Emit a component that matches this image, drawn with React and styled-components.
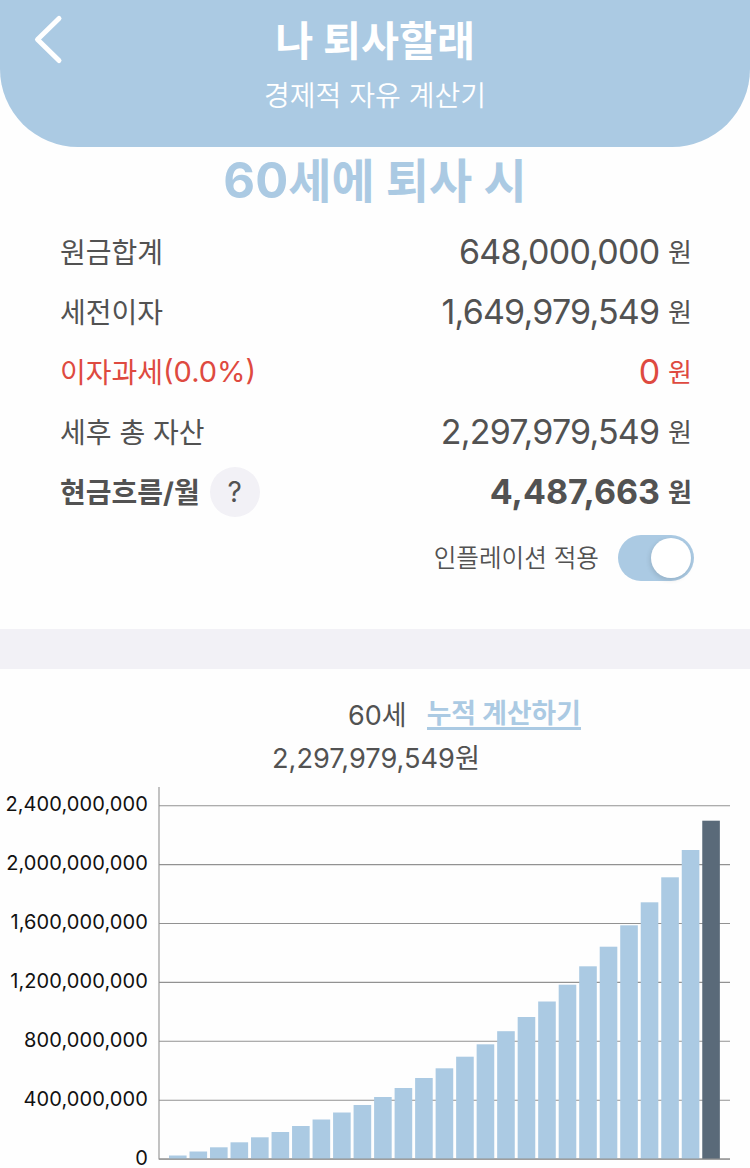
import React from "react";
import styled, { createGlobalStyle } from "styled-components";

const BLUE = "#abcae3";
const TEXT = "#525252";
const RED = "#de4a40";

const GlobalStyle = createGlobalStyle`
  body {
    margin: 0;
    background: #fefefe;
    font-family: Inter, "Noto Sans CJK KR", sans-serif;
    color: ${TEXT};
  }
`;

const Screen = styled.div`
  width: 750px;
  height: 1168px;
  overflow: hidden;
  display: flex;
  flex-direction: column;
  background: #fefefe;
  white-space: nowrap;
`;

const Header = styled.header`
  height: 147px;
  flex: none;
  box-sizing: border-box;
  display: grid;
  grid-template-columns: 100px 1fr 100px;
  background: ${BLUE};
  color: #fff;
  border-radius: 0 0 78px 78px;
`;

const BackButton = styled.button`
  align-self: start;
  justify-self: start;
  margin: 12px 0 0 30px;
  padding: 0;
  border: 0;
  background: none;
  line-height: 0;
`;

const Titles = styled.div`
  display: flex;
  flex-direction: column;
  align-items: center;
  padding-top: 11px;
`;

const Title = styled.h1`
  margin: 0;
  font-size: 41.3px;
  line-height: 60px;
  font-weight: 700;
`;

const Subtitle = styled.div`
  font-size: 28px;
  line-height: 50px;
  font-weight: 350;
`;

const Heading = styled.h2`
  margin: 0;
  height: 75px;
  flex: none;
  text-align: center;
  font-size: 47px;
  line-height: 68px;
  font-weight: 700;
  color: ${BLUE};
`;

const HeadingAge = styled.span`
  font-size: 49px;
  line-height: 1;
`;

const Summary = styled.section`
  flex: none;
  height: 407px;
  box-sizing: border-box;
  padding: 0 58px 0 60px;
`;

const Row = styled.div`
  height: 60px;
  display: flex;
  align-items: center;
  justify-content: space-between;
  color: ${(p) => (p.$danger ? RED : TEXT)};
  font-weight: ${(p) => (p.$strong ? 700 : 400)};
`;

const Label = styled.div`
  display: flex;
  align-items: center;
  gap: 10px;
  font-size: 28px;
  line-height: 60px;
`;

const LabelText = styled.span`
  padding-top: 2px;
`;

const Rate = styled.span`
  margin-left: -10px;
  font-size: 29px;
  line-height: 62px;
`;

const Help = styled.button`
  width: 50px;
  height: 50px;
  padding: 0;
  border: 0;
  border-radius: 50%;
  background: #f2f1f6;
  color: ${TEXT};
  font: 400 28px/50px Inter, sans-serif;
`;

const Amount = styled.div`
  display: flex;
  align-items: center;
  gap: 8px;
  font-size: 34px;
  line-height: 62px;
`;

const Digits = styled.span`
  letter-spacing: ${(p) => (p.$strong ? "0" : "-0.8px")};
  margin-right: ${(p) => (p.$strong ? "0" : "0.8px")};
`;

const Unit = styled.span`
  padding-top: 2px;
  font-size: 26px;
  line-height: 60px;
`;

const ToggleRow = styled.div`
  height: 72px;
  display: flex;
  align-items: center;
  justify-content: flex-end;
  gap: 19px;
  margin-right: -2px;
`;

const ToggleLabel = styled.span`
  font-size: 24.6px;
  line-height: 40px;
  padding-bottom: 1px;
  font-weight: 350;
`;

const Switch = styled.div`
  width: 76px;
  height: 46px;
  box-sizing: border-box;
  padding: 3px;
  display: flex;
  justify-content: flex-end;
  border-radius: 23px;
  background: ${BLUE};
`;

const Knob = styled.div`
  width: 40px;
  height: 40px;
  border-radius: 50%;
  background: #fff;
  box-shadow: -1px 2px 5px rgba(0, 0, 0, 0.12);
`;

const Divider = styled.div`
  height: 40px;
  flex: none;
  background: #f2f1f6;
`;

const ChartHead = styled.div`
  flex: none;
  height: 118px;
  box-sizing: border-box;
  padding-top: 22px;
`;

const AgeLine = styled.div`
  display: flex;
  align-items: center;
  gap: 20px;
  height: 44px;
  padding-left: 348px;
  font-size: 27px;
`;

const Link = styled.a`
  height: 30px;
  font-size: 26.8px;
  line-height: 32px;
  font-weight: 700;
  color: ${BLUE};
  border-bottom: 3px solid ${BLUE};
`;

const Total = styled.div`
  height: 44px;
  padding-left: 272px;
  font-size: 27.2px;
  line-height: 48px;
`;

const Chart = styled.section`
  flex: 1;
  display: flex;
  gap: 10px;
`;

const Axis = styled.div`
  width: 148px;
  display: flex;
  flex-direction: column;
  margin-top: 8.4px;
`;

const Tick = styled.div`
  flex: none;
  height: 58.9px;
  line-height: 18px;
  text-align: right;
  font-size: 20px;
  letter-spacing: 0.1px;
  color: #111;

  &:last-child {
    height: 18px;
  }
`;

const rows = [
  { label: "원금합계", amount: "648,000,000" },
  { label: "세전이자", amount: "1,649,979,549" },
  { label: "이자과세", rate: "(0.0%)", amount: "0", danger: true },
  { label: "세후 총 자산", amount: "2,297,979,549" },
  { label: "현금흐름/월", amount: "4,487,663", strong: true, help: true },
];

const ticks = [
  "2,400,000,000",
  "2,000,000,000",
  "1,600,000,000",
  "1,200,000,000",
  "800,000,000",
  "400,000,000",
  "0",
];

const bars = [
  3.5, 7.5, 11.7, 16.7, 21.7, 27, 33, 39.5, 46.5, 54, 62, 71, 81, 90.7, 102.3,
  114.7, 127.8, 142, 157.5, 174.3, 192.7, 212.3, 233.7, 256.7, 281.7, 309, 338.3,
];

function BarChart() {
  return (
    <svg width="592" height="381" viewBox="158 787 592 381">
      {ticks.map((t, i) => (
        <line key={t} x1="159" x2="730" y1={805.7 + i * 58.9} y2={805.7 + i * 58.9} stroke="#929292" strokeWidth="1.1" />
      ))}
      {bars.map((h, i) => (
        <rect
          key={i}
          x={169 + i * 20.51}
          y={1159 - h}
          width="17.6"
          height={h}
          fill={i === bars.length - 1 ? "#5a6a79" : BLUE}
        />
      ))}
      <path d="M159 787V1159H730" fill="none" stroke="#929292" strokeWidth="1.1" />
    </svg>
  );
}

export default function App() {
  return (
    <>
      <GlobalStyle />
      <Screen>
        <Header>
          <BackButton aria-label="뒤로">
            <svg width="36" height="56" viewBox="0 0 36 56" fill="none">
              <path d="M29 6.5L7.5 27.5L29 48.5" stroke="#fff" strokeWidth="5" strokeLinecap="round" strokeLinejoin="round" />
            </svg>
          </BackButton>
          <Titles>
            <Title>나 퇴사할래</Title>
            <Subtitle>경제적 자유 계산기</Subtitle>
          </Titles>
        </Header>
        <Heading>
          <HeadingAge>60</HeadingAge>세에 퇴사 시
        </Heading>
        <Summary>
          {rows.map((r) => (
            <Row key={r.label} $danger={r.danger} $strong={r.strong}>
              <Label>
                <LabelText>{r.label}</LabelText>
                {r.rate && <Rate>{r.rate}</Rate>}
                {r.help && <Help>?</Help>}
              </Label>
              <Amount>
                <Digits $strong={r.strong}>{r.amount}</Digits>
                <Unit>원</Unit>
              </Amount>
            </Row>
          ))}
          <ToggleRow>
            <ToggleLabel>인플레이션 적용</ToggleLabel>
            <Switch role="switch" aria-checked="true">
              <Knob />
            </Switch>
          </ToggleRow>
        </Summary>
        <Divider />
        <ChartHead>
          <AgeLine>
            60세 <Link>누적 계산하기</Link>
          </AgeLine>
          <Total>2,297,979,549원</Total>
        </ChartHead>
        <Chart>
          <Axis>
            {ticks.map((t) => (
              <Tick key={t}>{t}</Tick>
            ))}
          </Axis>
          <BarChart />
        </Chart>
      </Screen>
    </>
  );
}
